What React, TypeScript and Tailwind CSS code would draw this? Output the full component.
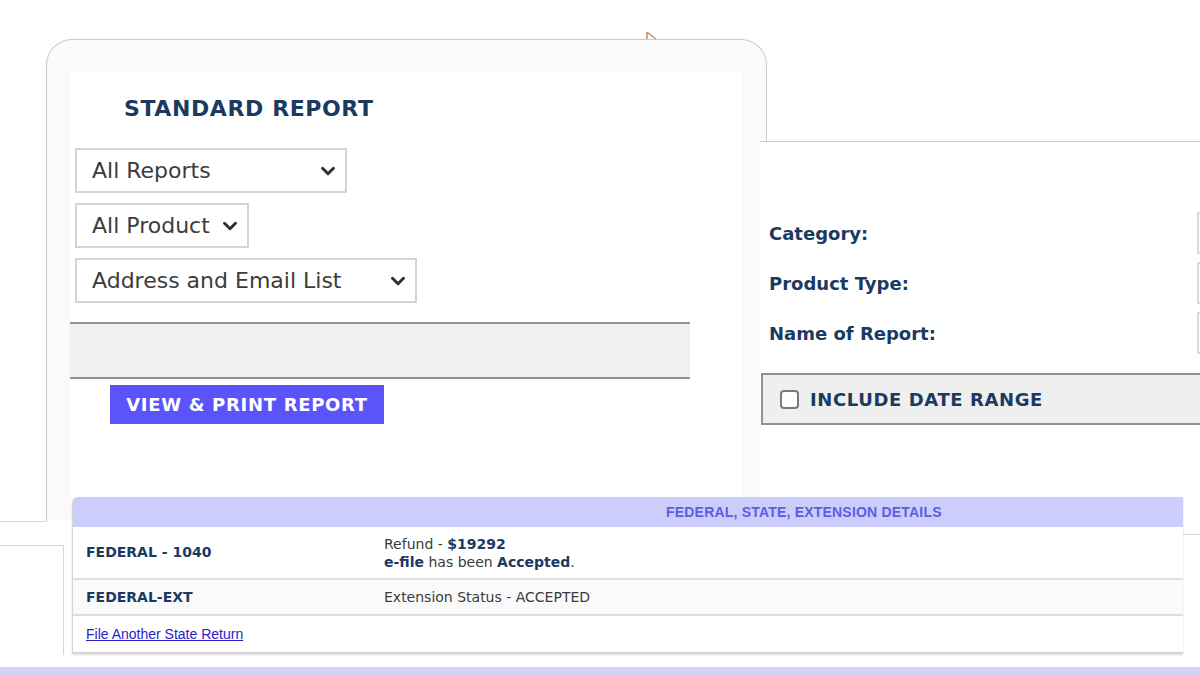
import { ChevronDown } from "lucide-react";

const NAVY = "text-[#1b3a62]";

function FakeSelect({ label, width }: { label: string; width: string }) {
  return (
    <div
      className={`${width} h-[45px] flex items-center justify-between border-2 border-[#d4d4d4] bg-white pl-[15px] pr-[6px]`}
    >
      <span className="text-[22px] text-[#3c3c3c] leading-none">{label}</span>
      <ChevronDown size={22} strokeWidth={3.2} className="text-[#2f2f2f]" />
    </div>
  );
}

function FieldRow({ label }: { label: string }) {
  return (
    <div className="flex items-center h-[42px]">
      <span className={`w-[437px] pl-[9px] text-[18px] font-bold ${NAVY}`}>{label}</span>
      <div className="w-[200px] h-[42px] border-2 border-[#dadada] bg-white" />
    </div>
  );
}

export default function App() {
  return (
    <div
      className="relative w-[1200px] h-[676px] overflow-hidden bg-white"
      style={{ fontFamily: '"DejaVu Sans", Verdana, sans-serif' }}
    >
      {/* tiny cursor tip peeking above the card */}
      <svg className="absolute left-[645px] top-[31px]" width="16" height="12" viewBox="0 0 16 12">
        <path d="M2 1 L2 10 M2 1 L12 9" stroke="#c99470" strokeWidth="1.6" fill="none" />
      </svg>

      {/* standard report card */}
      <div className="absolute left-[46px] top-[39px] w-[721px] h-[482px] rounded-t-[26px] border border-b-0 border-[#cacaca] bg-[#fafafa]">
        <div className="ml-[23px] mt-[31px] w-[672px] bg-white pt-[24px] h-[440px]">
          <h1 className={`pl-[54px] text-[22px] font-bold leading-[28px] tracking-[0.6px] ${NAVY}`}>
            STANDARD REPORT
          </h1>
          <div className="mt-[25px] ml-[5px] flex flex-col gap-[10px]">
            <FakeSelect label="All Reports" width="w-[272px]" />
            <FakeSelect label="All Product" width="w-[174px]" />
            <FakeSelect label="Address and Email List" width="w-[342px]" />
          </div>
          <div className="mt-[19px] w-[620px] h-[57px] bg-[#f0f0f0] border-y-2 border-[#8c919b]" />
          <button className="mt-[6px] ml-[40px] h-[39px] w-[274px] bg-[#5b54fa] text-white text-[18px] font-bold tracking-[0.7px]">
            VIEW &amp; PRINT REPORT
          </button>
        </div>
      </div>

      {/* right filter panel */}
      <div className="absolute left-[760px] top-[141px] w-[640px] h-[400px] border-t border-[#cdcdcd] bg-white">
        <div className="mt-[70px] flex flex-col gap-[8px]">
          <FieldRow label="Category:" />
          <FieldRow label="Product Type:" />
          <FieldRow label="Name of Report:" />
        </div>
        <div className="mt-[19px] ml-px h-[52px] flex items-center gap-[11px] pl-[17px] bg-[#efefef] border-2 border-r-0 border-[#8d929c]">
          <span className="w-[19px] h-[19px] rounded-[4px] border-2 border-[#7a7a7a] bg-white" />
          <span className={`text-[18px] font-bold tracking-[0.6px] ${NAVY}`}>INCLUDE DATE RANGE</span>
        </div>
      </div>

      {/* side scraps */}
      <div className="absolute left-0 top-[521px] w-[47px] h-[30px] border-t border-[#d6d6d6] bg-white" />
      <div className="absolute left-0 top-[545px] w-[64px] h-[110px] border-t border-r border-[#d6d6d6] bg-white" />
      <div className="absolute left-[1180px] top-[534px] w-[40px] h-[122px] border-t border-[#d6d6d6] bg-white" />

      {/* federal / state table */}
      <div className="absolute left-[72px] top-[497px] w-[1111px] rounded-tl-[6px] border-l border-b-2 border-[#d4d4d4] bg-white shadow-[0_1px_3px_rgba(0,0,0,0.12)] overflow-hidden">
        <div
          className="h-[30px] flex items-center bg-[#cccdfb] pl-[593px] text-[14px] font-bold tracking-[0.2px] text-[#5c5de2]"
          style={{ fontFamily: '"Liberation Sans", Arial, sans-serif' }}
        >
          FEDERAL, STATE, EXTENSION DETAILS
        </div>
        <div className="flex items-center h-[53px] border-b-2 border-[#dedede] text-[14px]">
          <span className={`w-[311px] pl-[13px] font-bold ${NAVY}`}>FEDERAL - 1040</span>
          <div className="leading-[18px] text-[#3a3a3a]">
            <div>
              Refund - <b className={NAVY}>$19292</b>
            </div>
            <div>
              <b className={NAVY}>e-file</b> has been <b className={NAVY}>Accepted</b>.
            </div>
          </div>
        </div>
        <div className="flex items-center h-[36px] border-b-2 border-[#dedede] bg-[#fafafa] text-[14px]">
          <span className={`w-[311px] pl-[13px] font-bold ${NAVY}`}>FEDERAL-EXT</span>
          <span className="text-[#3a3a3a]">Extension Status - ACCEPTED</span>
        </div>
        <div className="flex items-center h-[36px] pl-[13px]">
          <a
            href="#"
            className="text-[14px] text-[#2a22c8] underline"
            style={{ fontFamily: '"Liberation Sans", Arial, sans-serif' }}
          >
            File Another State Return
          </a>
        </div>
      </div>

      {/* bottom strip */}
      <div className="absolute left-0 top-[667px] w-[1200px] h-[12px] bg-[#d2d2f7]" />
    </div>
  );
}
